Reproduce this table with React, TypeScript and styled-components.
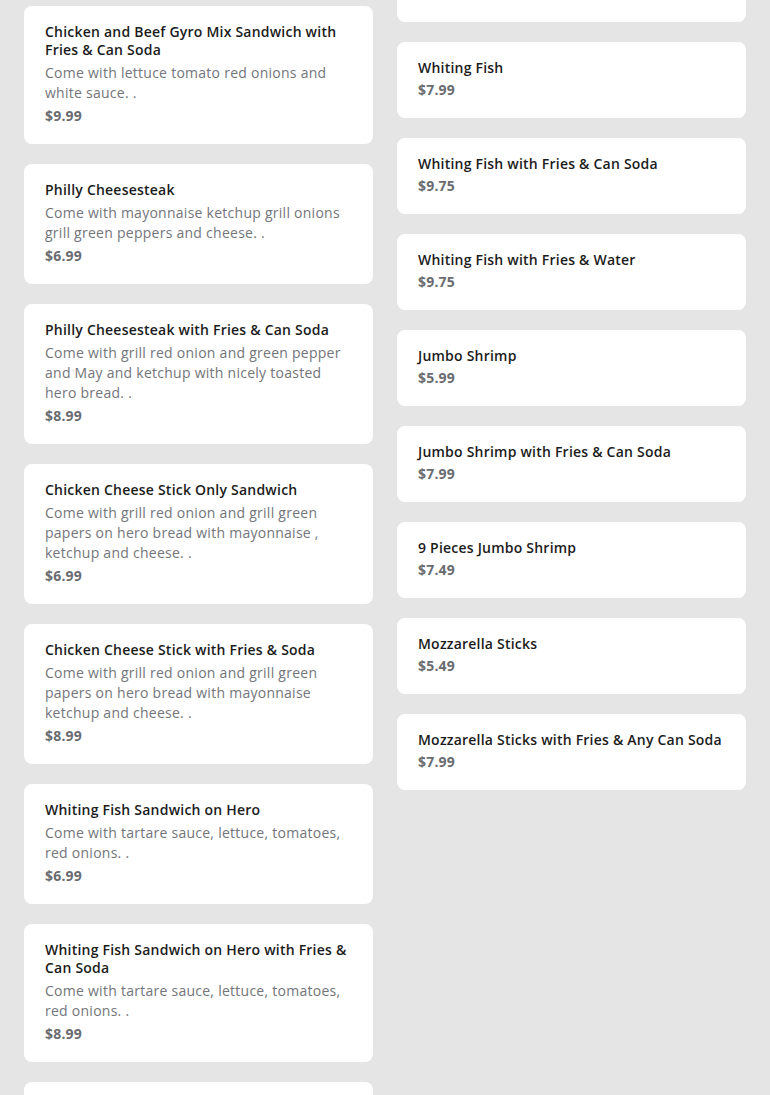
import styled, { createGlobalStyle } from "styled-components"

const Global = createGlobalStyle`
body {
    margin: 0;
    background: #e5e5e5;
    font-family: "Open Sans", "Liberation Sans", sans-serif;
}
`

type Item = { title: string; desc?: string; price: string }

const left: Item[] = [
    { title: "Chicken and Beef Gyro Mix Sandwich with Fries & Can Soda", desc: "Come with lettuce tomato red onions and white sauce. .", price: "$9.99" },
    { title: "Philly Cheesesteak", desc: "Come with mayonnaise ketchup grill onions grill green peppers and cheese. .", price: "$6.99" },
    { title: "Philly Cheesesteak with Fries & Can Soda", desc: "Come with grill red onion and green pepper and May and ketchup with nicely toasted hero bread. .", price: "$8.99" },
    { title: "Chicken Cheese Stick Only Sandwich", desc: "Come with grill red onion and grill green papers on hero bread with mayonnaise , ketchup and cheese. .", price: "$6.99" },
    { title: "Chicken Cheese Stick with Fries & Soda", desc: "Come with grill red onion and grill green papers on hero bread with mayonnaise ketchup and cheese. .", price: "$8.99" },
    { title: "Whiting Fish Sandwich on Hero", desc: "Come with tartare sauce, lettuce, tomatoes, red onions. .", price: "$6.99" },
    { title: "Whiting Fish Sandwich on Hero with Fries & Can Soda", desc: "Come with tartare sauce, lettuce, tomatoes, red onions. .", price: "$8.99" },
    { title: "Whiting Fish Sandwich with Fries & Water", desc: "Come with tartare sauce, lettuce, tomatoes, red onions. .", price: "$8.99" },
]

const right: Item[] = [
    { title: "Chicken Nuggets", price: "$5.99" },
    { title: "Whiting Fish", price: "$7.99" },
    { title: "Whiting Fish with Fries & Can Soda", price: "$9.75" },
    { title: "Whiting Fish with Fries & Water", price: "$9.75" },
    { title: "Jumbo Shrimp", price: "$5.99" },
    { title: "Jumbo Shrimp with Fries & Can Soda", price: "$7.99" },
    { title: "9 Pieces Jumbo Shrimp", price: "$7.49" },
    { title: "Mozzarella Sticks", price: "$5.49" },
    { title: "Mozzarella Sticks with Fries & Any Can Soda", price: "$7.99" },
]

const MenuCard = ({ item, peek }: { item: Item; peek?: boolean }) => (
    <Card $peek={peek}>
        <Title>{item.title}</Title>
        {item.desc && <Desc>{item.desc}</Desc>}
        <Price>{item.price}</Price>
    </Card>
)

const App = () => {
    return (
        <Page>
            <Global />
            <Column>
                {left.map((it, i) => <MenuCard key={i} item={it} />)}
            </Column>
            <Column>
                {right.map((it, i) => <MenuCard key={i} item={it} peek={i === 0} />)}
            </Column>
        </Page>
    )
}

export default App

const Page = styled.div`
    display: grid;
    grid-template-columns: 1fr 1fr;
    gap: 24px;
    padding: 6px 24px 0;
    height: 1095px;
    overflow: hidden;
    box-sizing: border-box;
    align-items: start;
`
const Column = styled.div`
    display: flex;
    flex-direction: column;
    gap: 20px;
`
/* the first card on the right is scrolled partly off the top */
const Card = styled.div<{ $peek?: boolean }>`
    background: #fff;
    border-radius: 8px;
    padding: 17px 21px 18px;
    display: flex;
    flex-direction: column;
    margin-top: ${p => (p.$peek ? "-60px" : "0")};
`
const Title = styled.div`
    font-size: 14px;
    line-height: 18px;
    font-weight: 600;
    letter-spacing: 0.22px;
    color: #1c1c1c;
`
const Desc = styled.div`
    font-size: 14px;
    line-height: 20px;
    letter-spacing: 0.26px;
    color: #73757a;
    margin-top: 4px;
`
const Price = styled.div`
    font-size: 14px;
    line-height: 20px;
    font-weight: 700;
    letter-spacing: 0.2px;
    color: #6a6c70;
    margin-top: 3px;
`
